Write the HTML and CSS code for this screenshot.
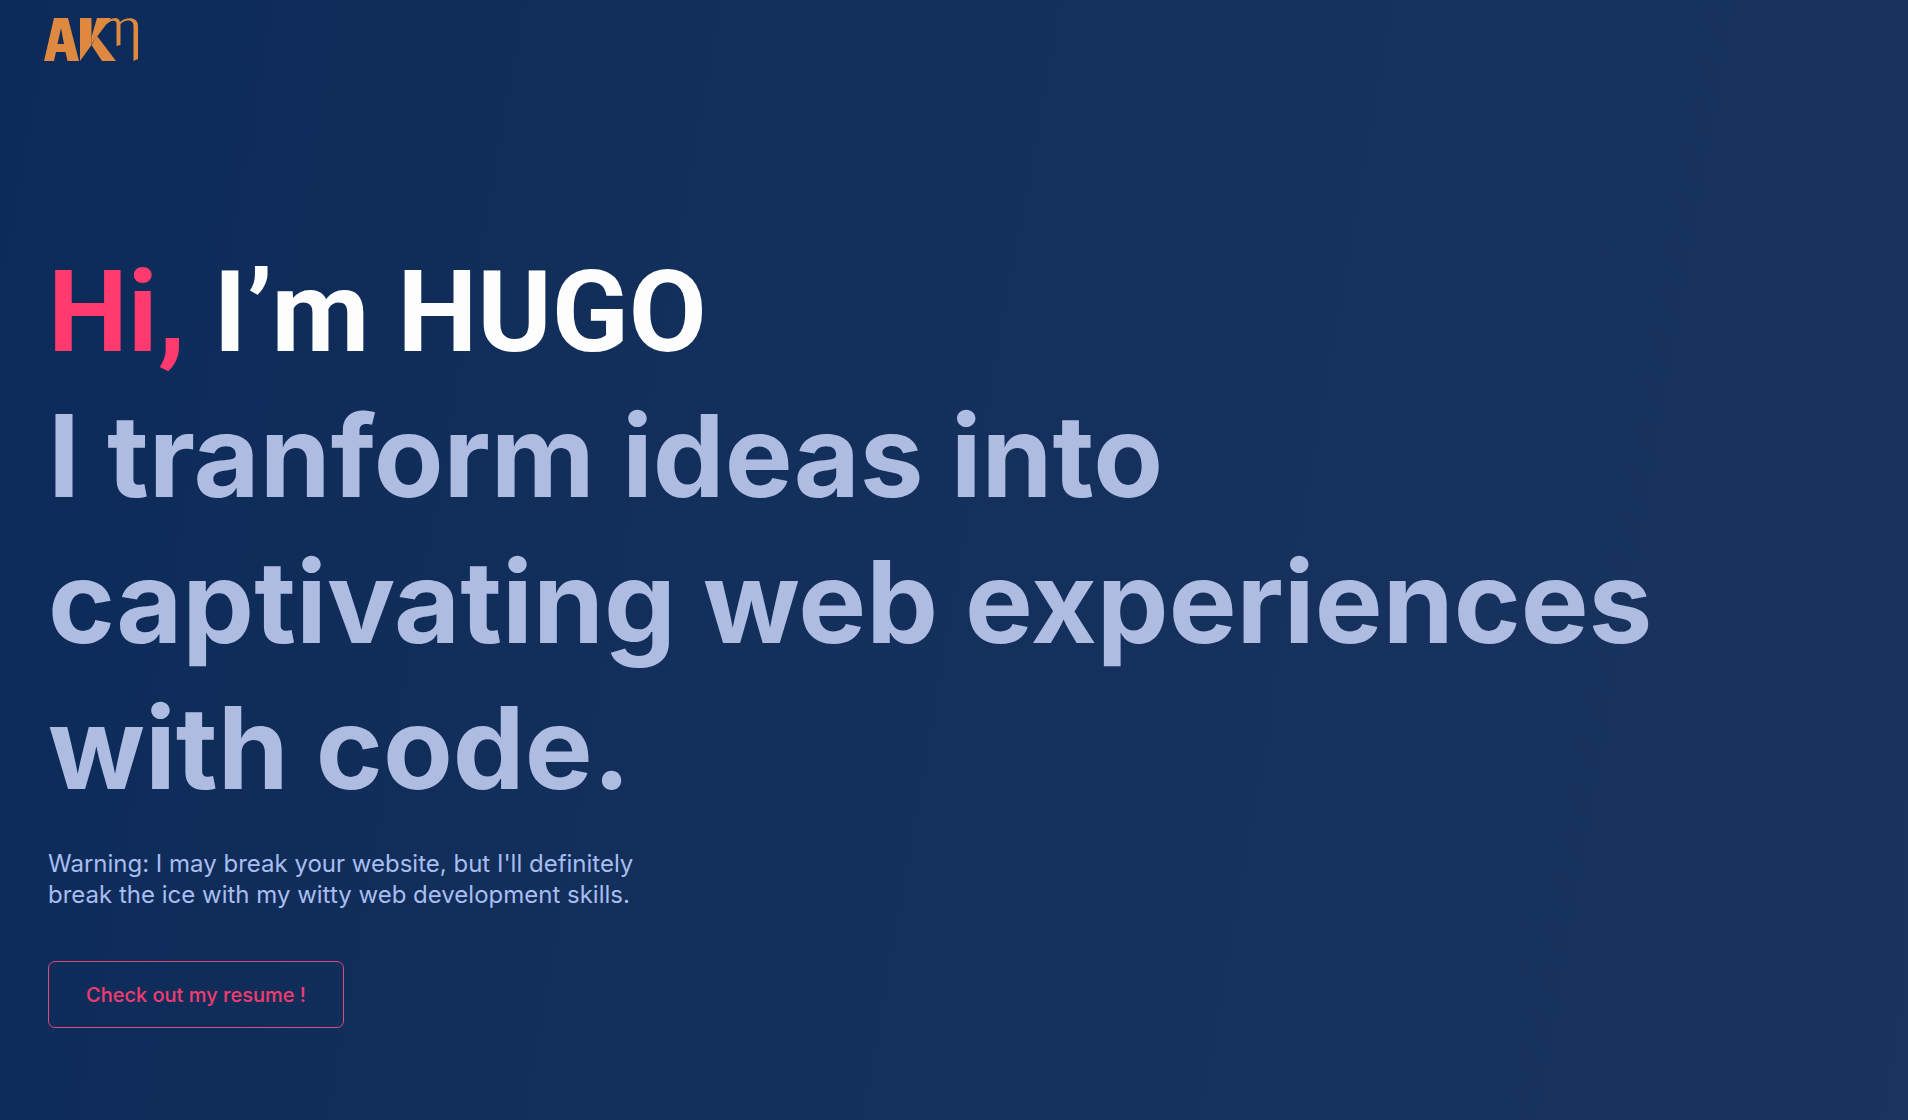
FILE: index.html
```
<!DOCTYPE html>
<html lang="en">
<head>
<meta charset="utf-8">
<meta name="viewport" content="width=device-width, initial-scale=1">
<title>Hugo – Web developer</title>
<link rel="stylesheet" href="styles.css">
</head>
<body>
<header class="header">
  <a class="logo" href="#" aria-label="AKN home">
    <svg width="96" height="44" viewBox="0 0 96 44" fill="currentColor" aria-hidden="true">
      <path fill-rule="evenodd" d="M0 44 10 1H24L35 44H23.500L21.500 35H12L10 44ZM17 11 13.500 27H20Z"/>
      <path d="M36 1H47.500V28L36 44Z"/>
      <path d="M53 1H67L47.500 27V20Z"/>
      <path d="M53 19 72 44H58L47.500 28Z"/>
      <path d="M61 7C66 0 75 -1 76 5C81 0 94 -1 94 9V42L89.500 44V9C89.500 2 81 2 76.500 7V28L72.500 29V7C72.500 2 67 3 60 9Z"/>
    </svg>
  </a>
</header>
<main class="hero">
  <h1 class="title"><span class="intro"><span class="accent">Hi,</span> I’m HUGO</span><br>I tranform ideas into<br>captivating web experiences<br>with code.</h1>
  <p class="lead">Warning: I may break your website, but I'll definitely<br>break the ice with my witty web development skills.</p>
  <button class="resume" type="button">Check out my resume !</button>
</main>
</body>
</html>
```
FILE: styles.css
```
* { box-sizing: border-box; }

body {
  margin: 0;
  min-height: 100vh;
  font-family: Inter, "Liberation Sans", sans-serif;
  color: #afbce2;
  background: linear-gradient(100deg, #0c2b5a, #122e5a 30%, #18345f);
}

.header { padding: 17px 44px; }

.logo {
  display: block;
  width: 96px;
  color: #de893f;
}

.logo svg { display: block; }

.hero { padding: 159px 48px 80px; }

.title {
  margin: 0;
  font-size: 114px;
  line-height: 146px;
  font-weight: 700;
}

.intro {
  font-family: Roboto, "Liberation Sans", sans-serif;
  font-size: 113px;
  line-height: 1;
  color: #fdfdfd;
}

.accent { color: #ff3a6e; }

.lead {
  margin: 27px 0 51px;
  font-size: 24px;
  line-height: 31px;
  color: #a9bdf0;
}

.resume {
  height: 67px;
  padding: 0 37px;
  border: 1px solid #e04880;
  border-radius: 7px;
  background: transparent;
  font: 500 20px Inter, "Liberation Sans", sans-serif;
  color: #f23c70;
  cursor: pointer;
}
```
